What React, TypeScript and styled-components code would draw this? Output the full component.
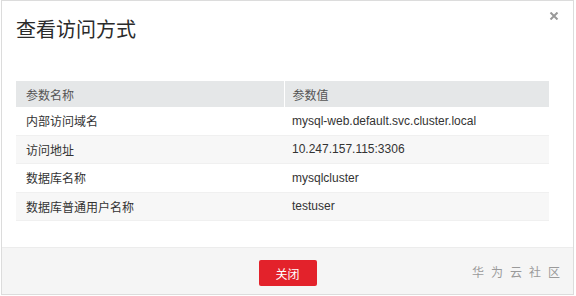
import styled, { createGlobalStyle } from "styled-components";

const GlobalStyle = createGlobalStyle`
  html, body {
    margin: 0;
    padding: 0;
    background: #fff;
    font-family: "Liberation Sans", "Noto Sans CJK SC", sans-serif;
  }
`;

const Dialog = styled.div`
  position: relative;
  box-sizing: border-box;
  margin-left: 1px;
  width: 573px;
  height: 295px;
  border: 1px solid #dcdcdc;
  background: #fff;
  display: flex;
  flex-direction: column;
`;

const Header = styled.div`
  padding: 15px 14px 0;
  height: 80px;
  box-sizing: border-box;
`;

const Title = styled.h2`
  margin: 0;
  font-size: 20px;
  line-height: 28px;
  font-weight: normal;
  color: #2b2b2b;
`;

const Close = styled.button`
  position: absolute;
  top: 10px;
  right: 14px;
  width: 11px;
  height: 9px;
  padding: 0;
  border: 0;
  background: none;
  cursor: pointer;
  display: flex;
  align-items: center;
  justify-content: center;
`;

const Body = styled.div`
  flex: 1;
  padding: 0 0 0 14px;
`;

const Table = styled.table`
  width: 533px;
  border-collapse: collapse;
  font-size: 12px;
  color: #333;
  table-layout: fixed;
`;

const HeadCell = styled.th<{ $first?: boolean }>`
  height: 26px;
  padding: 0 0 0 ${(p) => (p.$first ? 10 : 8)}px;
  text-align: left;
  font-weight: normal;
  color: #555;
  background: #e5e7e8;
  border-left: ${(p) => (p.$first ? "none" : "1px solid #fff")};
`;

const Row = styled.tr<{ $striped: boolean }>`
  background: ${(p) => (p.$striped ? "#f7f7f7" : "#fff")};
  border-bottom: 1px solid #f0f0f0;
`;

const Cell = styled.td<{ $first?: boolean }>`
  height: 27.5px;
  padding: 0 0 0 ${(p) => (p.$first ? 10 : 8)}px;
  color: #333;
`;

const Footer = styled.div`
  position: relative;
  height: 47px;
  box-sizing: border-box;
  border-top: 1px solid #ececec;
  background: #f5f5f5;
  display: flex;
  justify-content: center;
  padding-top: 12px;
`;

const Button = styled.button`
  width: 58px;
  height: 26px;
  padding: 0;
  border: 0;
  border-radius: 2px;
  background: #e3222b;
  color: #fff;
  font-family: inherit;
  font-size: 12px;
  cursor: pointer;
`;

const Watermark = styled.span`
  position: absolute;
  right: 6px;
  top: 17px;
  font-size: 12px;
  letter-spacing: 7px;
  color: #9a9a9a;
  line-height: 16px;
`;

const rows = [
  ["内部访问域名", "mysql-web.default.svc.cluster.local"],
  ["访问地址", "10.247.157.115:3306"],
  ["数据库名称", "mysqlcluster"],
  ["数据库普通用户名称", "testuser"],
];

export default function App() {
  return (
    <>
      <GlobalStyle />
      <Dialog>
        <Header>
          <Title>查看访问方式</Title>
        </Header>
        <Close aria-label="close">
          <svg width="10" height="8" viewBox="0 0 10 8">
            <path d="M1.5 0.5 L8.5 7.5 M8.5 0.5 L1.5 7.5" stroke="#999" strokeWidth="2" />
          </svg>
        </Close>
        <Body>
          <Table>
            <colgroup>
              <col style={{ width: 268 }} />
              <col />
            </colgroup>
            <thead>
              <tr>
                <HeadCell $first>参数名称</HeadCell>
                <HeadCell>参数值</HeadCell>
              </tr>
            </thead>
            <tbody>
              {rows.map(([k, v], i) => (
                <Row key={k} $striped={i % 2 === 1}>
                  <Cell $first>{k}</Cell>
                  <Cell>{v}</Cell>
                </Row>
              ))}
            </tbody>
          </Table>
        </Body>
        <Footer>
          <Button>关闭</Button>
          <Watermark>华为云社区</Watermark>
        </Footer>
      </Dialog>
    </>
  );
}
